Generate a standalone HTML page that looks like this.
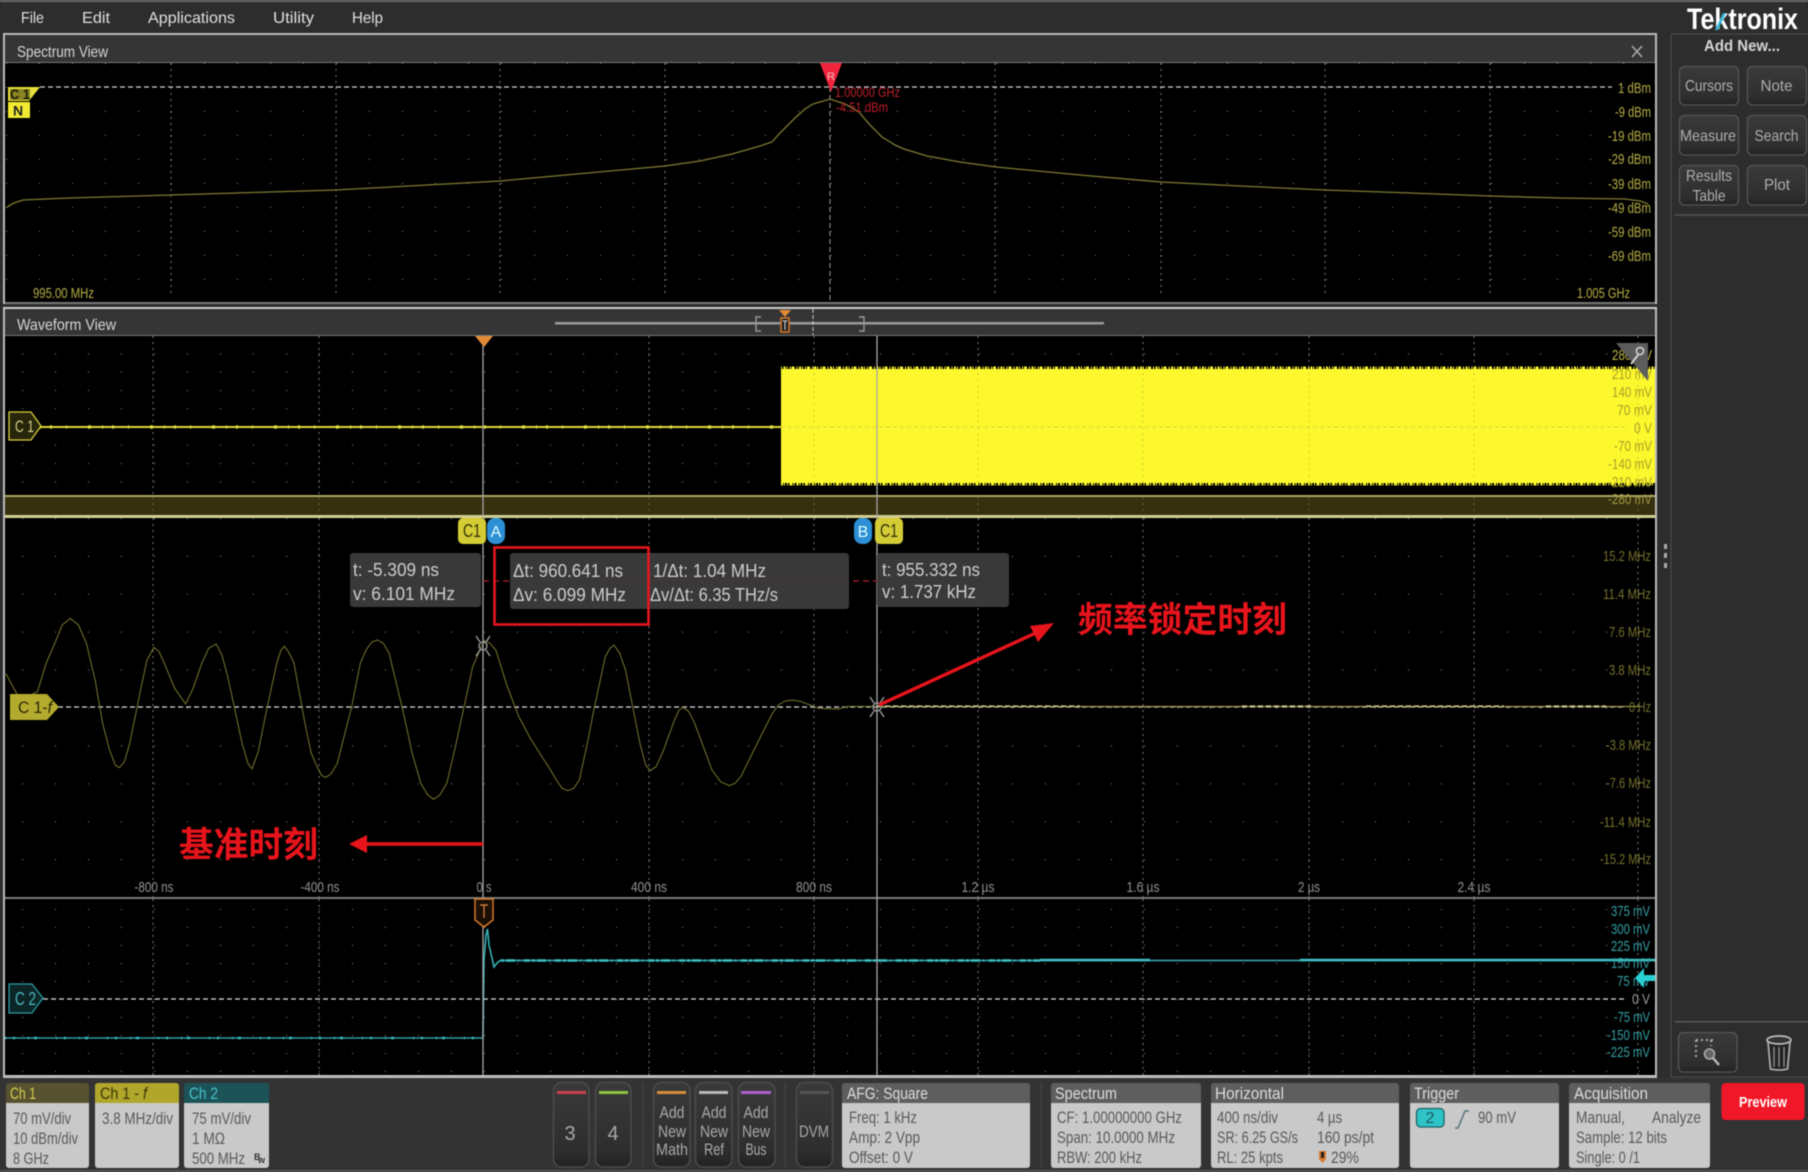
<!DOCTYPE html>
<html><head><meta charset="utf-8"><title>Tektronix</title>
<style>
html,body{margin:0;padding:0;background:#2d2d2d;width:1808px;height:1172px;overflow:hidden}
svg{display:block;filter:blur(0.5px)}
text{font-family:"Liberation Sans","Noto Sans CJK SC",sans-serif}
.cjk{font-family:"Noto Sans CJK SC","WenQuanYi Zen Hei",sans-serif;font-weight:700;fill:#e8141c}
.tr{vector-effect:non-scaling-stroke;fill:none}
.m{font-size:16px;fill:#e0e0e0}
.ttl{font-size:16px;fill:#d5d5d5}
.s{font-size:15px;fill:#b5ae45;text-anchor:end}
.w{font-size:15px;fill:#bdb748;text-anchor:end}
.f{font-size:15px;fill:#736f2c;text-anchor:end}
.c{font-size:15px;fill:#359ea4;text-anchor:end}
.t{font-size:15px;fill:#929292;text-anchor:middle}
.r{font-size:18px;fill:#cdcdcd}
.btn{font-size:16px;fill:#aeaeae;text-anchor:middle}
.hd{font-size:17px;fill:#dcdcdc}
.bd{font-size:17px;fill:#5a5a5a}
.bb{font-size:17px;fill:#a8a8a8;text-anchor:middle}
</style></head><body>
<svg width="1808" height="1172" viewBox="0 0 1808 1172" xmlns="http://www.w3.org/2000/svg">
<defs>
<pattern id="g1" patternUnits="userSpaceOnUse" x="6" y="63" width="33" height="24"><rect width="1" height="1" fill="#8a8a8a"/></pattern>
<pattern id="g2" patternUnits="userSpaceOnUse" x="22" y="335" width="33" height="18.3"><rect width="1" height="1" fill="#8a8a8a"/></pattern>
<pattern id="g3" patternUnits="userSpaceOnUse" x="22" y="518" width="33" height="37.9"><rect width="1" height="1" fill="#8a8a8a"/></pattern>
<pattern id="g4" patternUnits="userSpaceOnUse" x="22" y="909" width="33" height="18"><rect width="1" height="1" fill="#8a8a8a"/></pattern>
<linearGradient id="bk" x1="0" y1="0" x2="0" y2="1"><stop offset="0" stop-color="#3a3a3a"/><stop offset=".8" stop-color="#2e2e2e"/><stop offset="1" stop-color="#222"/></linearGradient>
</defs>

<rect width="1808" height="1172" fill="#2d2d2d"/>
<!-- menu -->
<rect x="0" y="0" width="1808" height="2" fill="#6a6a6a"/>
<text class="m" x="21" y="23" textLength="23" lengthAdjust="spacingAndGlyphs">File</text>
<text class="m" x="82" y="23" textLength="28" lengthAdjust="spacingAndGlyphs">Edit</text>
<text class="m" x="148" y="23" textLength="87" lengthAdjust="spacingAndGlyphs">Applications</text>
<text class="m" x="273" y="23" textLength="41" lengthAdjust="spacingAndGlyphs">Utility</text>
<text class="m" x="352" y="23" textLength="31" lengthAdjust="spacingAndGlyphs">Help</text>

<!-- frame -->
<rect x="3" y="33" width="1654" height="1045" fill="#bbb"/>
<!-- spectrum -->
<rect x="5" y="35" width="1650" height="27" fill="#353535"/>
<rect x="5" y="62" width="1650" height="1" fill="#777"/>
<text class="ttl" x="17" y="57" textLength="91" lengthAdjust="spacingAndGlyphs">Spectrum View</text>
<path d="M1632 46l10 11M1642 46l-10 11" stroke="#aaa" stroke-width="1.6" fill="none"/>
<rect x="5" y="63" width="1650" height="239" fill="#000"/>
<rect x="5" y="63" width="1650" height="239" fill="url(#g1)"/>
<g stroke="#7a7a7a" stroke-width="1" stroke-dasharray="2 4">
<path d="M171 63V296M336 63V296M500 63V296M665 63V296M995 63V296M1161 63V296M1325 63V296M1490 63V296"/>
</g>
<path d="M830 63V302" stroke="#999" stroke-dasharray="5 3"/>
<path d="M40 87H1612" stroke="#cfcfcf" stroke-width="1.2" stroke-dasharray="5 3"/>
<polyline fill="none" stroke="#7f7b34" stroke-width="1.3" points="7,207 14,203 23,200 69,198 171,195 336,190 500,181 665,166 700,161 732,154 760,146 772,142 780,133 796,117 805,109 813,104 830,99 845,104 859,112 870,125 882,137 895,145 904,149 927,156 960,162 996,167 1080,175 1161,182 1240,186 1325,190 1410,193 1490,196 1560,198 1625,199 1640,201 1648,204"/>
<path d="M820 63h22l-11 29z" fill="#f2243c"/>
<text x="831" y="80" font-size="11" fill="#f0c0c0" text-anchor="middle">R</text>
<text x="835" y="97" font-size="14" fill="#b81e28" textLength="65" lengthAdjust="spacingAndGlyphs">1.00000 GHz</text>
<text x="836" y="112" font-size="14" fill="#b81e28" textLength="52" lengthAdjust="spacingAndGlyphs">-4.51 dBm</text>
<path d="M8 87h32l-11 14h-21z" fill="#e6df3a"/>
<rect x="10" y="89" width="20" height="11" fill="#3a3710" opacity=".55"/>
<text x="10" y="99" font-size="14" fill="#1c1a04" font-weight="700" textLength="20" lengthAdjust="spacingAndGlyphs">C 1</text>
<rect x="8" y="102" width="22" height="16" fill="#f2ea30"/>
<text x="13" y="115.500" font-size="14" fill="#222" font-weight="700">N</text>
<text class="s" x="1651" y="93" textLength="33" lengthAdjust="spacingAndGlyphs">1 dBm</text>
<text class="s" x="1651" y="117" textLength="36" lengthAdjust="spacingAndGlyphs">-9 dBm</text>
<text class="s" x="1651" y="141" textLength="43" lengthAdjust="spacingAndGlyphs">-19 dBm</text>
<text class="s" x="1651" y="164" textLength="43" lengthAdjust="spacingAndGlyphs">-29 dBm</text>
<text class="s" x="1651" y="189" textLength="43" lengthAdjust="spacingAndGlyphs">-39 dBm</text>
<text class="s" x="1651" y="213" textLength="43" lengthAdjust="spacingAndGlyphs">-49 dBm</text>
<text class="s" x="1651" y="237" textLength="43" lengthAdjust="spacingAndGlyphs">-59 dBm</text>
<text class="s" x="1651" y="261" textLength="43" lengthAdjust="spacingAndGlyphs">-69 dBm</text>
<text x="33" y="298" font-size="15" fill="#b5ae45" textLength="61" lengthAdjust="spacingAndGlyphs">995.00 MHz</text>
<text x="1577" y="298" font-size="15" fill="#b5ae45" textLength="53" lengthAdjust="spacingAndGlyphs">1.005 GHz</text>
<rect x="5" y="302" width="1650" height="2" fill="#777"/>
<rect x="3" y="304" width="1654" height="3" fill="#2d2d2d"/>
<rect x="3" y="307" width="1654" height="2" fill="#ccc"/>

<!-- waveform title -->
<rect x="5" y="309" width="1650" height="26" fill="#353535"/>
<rect x="5" y="335" width="1650" height="1" fill="#777"/>
<text class="ttl" x="17" y="330" textLength="99" lengthAdjust="spacingAndGlyphs">Waveform View</text>
<rect x="555" y="322" width="549" height="2.5" fill="#9a9a9a"/>
<path d="M761 317h-5v14h5M859 317h5v14h-5" fill="none" stroke="#999" stroke-width="1.4"/>
<path d="M813 309V335" stroke="#ccc" stroke-dasharray="4 2"/>
<path d="M779 310h12l-6 7z" fill="#e08a35"/>
<rect x="781" y="318" width="8" height="14" fill="#222" stroke="#d9792a" stroke-width="1.5"/>
<path d="M785 321v9M782.5 321h5" stroke="#ddd" stroke-width="1"/>

<!-- upper plot -->
<rect x="5" y="336" width="1650" height="159" fill="#000"/>
<rect x="5" y="336" width="1650" height="159" fill="url(#g2)"/>
<g stroke="#7a7a7a" stroke-dasharray="2 4"><path d="M153 336V495M319 336V495M649 336V495"/></g>
<path d="M40 427H781" stroke="#dcd636" stroke-width="2"/>
<path d="M40 427H781" stroke="#e8e24a" stroke-width="3.2" stroke-dasharray="1 9 2 14 1 21 3 11"/>
<rect x="781" y="369" width="874" height="114" fill="#fdf72d"/>
<path d="M781 368H1655" stroke="#fdf72d" stroke-width="3" stroke-dasharray="1 1.5 2 1 1 2 1 1 3 2"/>
<path d="M781 484H1655" stroke="#fdf72d" stroke-width="3" stroke-dasharray="2 1 1 2 1 1.5 3 1 1 2"/>
<path d="M781 427H1625" stroke="#d8d23a" stroke-dasharray="4 3"/>
<g stroke="#d4cd2c" stroke-dasharray="2 4"><path d="M814 367V485M978 367V485M1143 367V485M1309 367V485M1474 367V485M1638 367V485"/></g>
<g stroke="#7a7a7a" stroke-dasharray="2 4"><path d="M814 336V367M978 336V367M1143 336V367M1309 336V367M1474 336V367M1638 336V367"/></g>
<text class="w" x="1652" y="360" textLength="40" lengthAdjust="spacingAndGlyphs">280 mV</text>
<text class="w" x="1652" y="379" style="fill:#a8a228" textLength="40" lengthAdjust="spacingAndGlyphs">210 mV</text>
<text class="w" x="1652" y="397" style="fill:#a8a228" textLength="40" lengthAdjust="spacingAndGlyphs">140 mV</text>
<text class="w" x="1652" y="415" style="fill:#a8a228" textLength="35" lengthAdjust="spacingAndGlyphs">70 mV</text>
<text class="w" x="1652" y="433" style="fill:#a8a228" textLength="18" lengthAdjust="spacingAndGlyphs">0 V</text>
<text class="w" x="1652" y="451" style="fill:#a8a228" textLength="38" lengthAdjust="spacingAndGlyphs">-70 mV</text>
<text class="w" x="1652" y="469" style="fill:#a8a228" textLength="44" lengthAdjust="spacingAndGlyphs">-140 mV</text>
<text class="w" x="1652" y="487" style="fill:#a8a228" textLength="44" lengthAdjust="spacingAndGlyphs">-210 mV</text>
<path d="M1616 343h32v38z" fill="#5c5c5c"/>
<circle cx="1640" cy="351" r="3.6" fill="none" stroke="#d0d0d0" stroke-width="1.6"/>
<path d="M1638 355l-7 9" stroke="#d0d0d0" stroke-width="2"/>
<path d="M9 412h22l10 14-10 14h-22z" fill="#27250a" stroke="#d8d040" stroke-width="1.3"/>
<text x="15" y="432" font-size="17" fill="#d8d28a" textLength="19" lengthAdjust="spacingAndGlyphs">C 1</text>

<!-- band -->
<rect x="5" y="495" width="1650" height="22" fill="#36300e"/>
<g stroke="#6a6430" stroke-dasharray="2 4"><path d="M153 497V516M319 497V516M649 497V516M814 497V516M978 497V516M1143 497V516M1309 497V516M1474 497V516M1638 497V516"/></g>
<rect x="5" y="495" width="1650" height="2" fill="#a8a565"/>
<rect x="5" y="515" width="1650" height="3" fill="#d2cf92"/>
<text class="w" x="1652" y="504" style="fill:#9d9740" textLength="44" lengthAdjust="spacingAndGlyphs">-280 mV</text>

<!-- middle plot -->
<rect x="5" y="518" width="1650" height="379" fill="#000"/>
<rect x="5" y="518" width="1650" height="379" fill="url(#g3)"/>
<g stroke="#7a7a7a" stroke-dasharray="2 4"><path d="M153 518V897M319 518V897M649 518V897M814 518V897M978 518V897M1143 518V897M1309 518V897M1474 518V897M1638 518V897"/></g>
<path d="M58 707H1625" stroke="#dcdcdc" stroke-width="1.2" stroke-dasharray="5 3"/>
<g transform="translate(0,620) scale(0.5765,0.33333)">
<polyline class="tr" stroke="#7a762f" stroke-width="1" stroke-linejoin="round" points="10,160 35,240 65,215 80,130 95,70 108,15 122,-5 136,15 150,70 158,130 165,180 178,310 190,390 200,435 207,443 216,425 225,370 245,200 255,120 267,82 276,95 285,130 303,205 322,252 335,205 350,130 362,85 375,72 385,105 395,170 420,370 430,430 437,447 448,395 460,290 480,130 487,92 493,78 502,100 510,130 530,320 540,400 550,440 558,467 565,472 574,462 585,430 610,260 625,130 635,90 645,66 655,60 665,70 675,100 700,280 715,400 730,490 742,525 752,538 763,525 775,490 790,380 805,260 820,140 830,100 840,62 850,70 860,90 880,200 900,290 920,355 940,410 955,450 965,480 975,505 985,512 995,505 1005,480 1020,360 1030,270 1050,110 1058,85 1065,75 1075,100 1085,150 1110,370 1120,435 1128,452 1138,440 1150,395 1170,300 1178,270 1185,262 1195,275 1205,310 1235,450 1250,485 1265,497 1275,490 1285,470 1325,330 1340,280 1350,255 1362,243 1375,240 1390,245 1405,255 1420,265 1455,267 1470,259 1522,259"/>
</g>
<path d="M877 706.500H1640" stroke="#9a9646" stroke-width="1.2"/>
<path d="M877 706H1080M1242 706H1312M1366 706H1504M1546 706H1606" stroke="#d4d49a" stroke-width="1.3" stroke-dasharray="5 3"/>
<!-- freq labels -->
<text class="f" x="1651" y="561" textLength="48" lengthAdjust="spacingAndGlyphs">15.2 MHz</text>
<text class="f" x="1651" y="599" textLength="48" lengthAdjust="spacingAndGlyphs">11.4 MHz</text>
<text class="f" x="1651" y="637" textLength="42" lengthAdjust="spacingAndGlyphs">7.6 MHz</text>
<text class="f" x="1651" y="675" textLength="42" lengthAdjust="spacingAndGlyphs">3.8 MHz</text>
<text class="f" x="1651" y="712" textLength="22" lengthAdjust="spacingAndGlyphs">0 Hz</text>
<text class="f" x="1651" y="750" textLength="45" lengthAdjust="spacingAndGlyphs">-3.8 MHz</text>
<text class="f" x="1651" y="788" textLength="45" lengthAdjust="spacingAndGlyphs">-7.6 MHz</text>
<text class="f" x="1651" y="827" textLength="51" lengthAdjust="spacingAndGlyphs">-11.4 MHz</text>
<text class="f" x="1651" y="864" textLength="51" lengthAdjust="spacingAndGlyphs">-15.2 MHz</text>
<!-- time labels -->
<text class="t" x="154" y="892" textLength="39" lengthAdjust="spacingAndGlyphs">-800 ns</text>
<text class="t" x="320" y="892" textLength="39" lengthAdjust="spacingAndGlyphs">-400 ns</text>
<text class="t" x="484" y="892" textLength="15" lengthAdjust="spacingAndGlyphs">0 s</text>
<text class="t" x="649" y="892" textLength="36" lengthAdjust="spacingAndGlyphs">400 ns</text>
<text class="t" x="814" y="892" textLength="36" lengthAdjust="spacingAndGlyphs">800 ns</text>
<text class="t" x="978" y="892" textLength="33" lengthAdjust="spacingAndGlyphs">1.2 µs</text>
<text class="t" x="1143" y="892" textLength="33" lengthAdjust="spacingAndGlyphs">1.6 µs</text>
<text class="t" x="1309" y="892" textLength="22" lengthAdjust="spacingAndGlyphs">2 µs</text>
<text class="t" x="1474" y="892" textLength="33" lengthAdjust="spacingAndGlyphs">2.4 µs</text>
<path d="M10 694h37l12 13-12 13h-37z" fill="#b3ab2e"/>
<text x="18" y="713" font-size="17" fill="#2a2808" textLength="34" lengthAdjust="spacingAndGlyphs">C 1-<tspan font-style="italic">f</tspan></text>

<!-- lower plot -->
<rect x="5" y="897" width="1650" height="2" fill="#7a7a7a"/>
<rect x="5" y="899" width="1650" height="176" fill="#000"/>
<rect x="5" y="899" width="1650" height="176" fill="url(#g4)"/>
<g stroke="#7a7a7a" stroke-dasharray="2 4"><path d="M153 899V1075M319 899V1075M649 899V1075M814 899V1075M978 899V1075M1143 899V1075M1309 899V1075M1474 899V1075M1638 899V1075"/></g>
<path d="M43 999H1627" stroke="#dcdcdc" stroke-width="1.2" stroke-dasharray="5 3"/>
<path d="M5 1038H483" stroke="#2f9da2" stroke-width="1.6"/>
<path d="M5 1038H483" stroke="#3bbcc0" stroke-width="2.6" stroke-dasharray="1 7 2 13 1 5 3 19"/>
<polyline fill="none" stroke="#33b0b5" stroke-width="1.6" points="483,1038 484,960 486,935 487.5,929 489,945 492,958 494,967 497,963 501,960"/>
<path d="M501 960.500H1655" stroke="#2f9da2" stroke-width="1.8"/>
<path d="M501 960.500H1040" stroke="#3bc0c4" stroke-width="2.6" stroke-dasharray="3 2 9 3 1 5 6 2"/>
<path d="M1040 960H1150M1300 960H1655" stroke="#3bc0c4" stroke-width="2.4"/>
<path d="M9 984h23l11 14-11 15h-23z" fill="#0c2628" stroke="#2c9aa0" stroke-width="1.3"/>
<text x="15" y="1005" font-size="18" fill="#4bb7bd" textLength="21" lengthAdjust="spacingAndGlyphs">C 2</text>
<text class="c" x="1650" y="916" textLength="39" lengthAdjust="spacingAndGlyphs">375 mV</text>
<text class="c" x="1650" y="934" textLength="39" lengthAdjust="spacingAndGlyphs">300 mV</text>
<text class="c" x="1650" y="951" textLength="39" lengthAdjust="spacingAndGlyphs">225 mV</text>
<text class="c" x="1650" y="968" textLength="39" lengthAdjust="spacingAndGlyphs">150 mV</text>
<text class="c" x="1650" y="986" textLength="33" lengthAdjust="spacingAndGlyphs">75 mV</text>
<text class="c" x="1650" y="1004" style="fill:#999" textLength="18" lengthAdjust="spacingAndGlyphs">0 V</text>
<text class="c" x="1650" y="1022" textLength="36" lengthAdjust="spacingAndGlyphs">-75 mV</text>
<text class="c" x="1650" y="1040" textLength="43" lengthAdjust="spacingAndGlyphs">-150 mV</text>
<text class="c" x="1650" y="1057" textLength="43" lengthAdjust="spacingAndGlyphs">-225 mV</text>
<path d="M1635 978l9-10v7h11v6h-11v7z" fill="#2ad0d4"/>

<!-- cursors -->
<path d="M483 336V1075M877 336V1075" stroke="#a8a8a8" stroke-width="1.3"/>
<path d="M475 336h18l-9 11z" fill="#e08a35"/>
<path d="M475 899h18v21l-9 7-9-7z" fill="#1a0f04" stroke="#d9792a" stroke-width="1.5"/>
<path d="M484 904v14M480 905h8" stroke="#c8763a" stroke-width="1.4"/>

<path d="M483 581H877" stroke="#a8222a" stroke-width="1.2" stroke-dasharray="6 4"/>
<rect x="350" y="553" width="131" height="54" rx="3" fill="#393939"/>
<rect x="510" y="553" width="339" height="56" rx="3" fill="#393939"/>
<path d="M600 581H849" stroke="#6a2a2c" stroke-width="1" stroke-dasharray="6 4" opacity=".5"/>
<rect x="877" y="553" width="132" height="54" rx="3" fill="#393939"/>
<text class="r" x="353" y="576" textLength="86" lengthAdjust="spacingAndGlyphs">t: -5.309 ns</text>
<text class="r" x="353" y="600" textLength="102" lengthAdjust="spacingAndGlyphs">v: 6.101 MHz</text>
<text class="r" x="513" y="577" textLength="110" lengthAdjust="spacingAndGlyphs">Δt: 960.641 ns</text>
<text class="r" x="513" y="601" textLength="113" lengthAdjust="spacingAndGlyphs">Δv: 6.099 MHz</text>
<text class="r" x="653" y="577" textLength="113" lengthAdjust="spacingAndGlyphs">1/Δt: 1.04 MHz</text>
<text class="r" x="650" y="601" textLength="128" lengthAdjust="spacingAndGlyphs">Δv/Δt: 6.35 THz/s</text>
<text class="r" x="882" y="576" textLength="98" lengthAdjust="spacingAndGlyphs">t: 955.332 ns</text>
<text class="r" x="882" y="598" textLength="94" lengthAdjust="spacingAndGlyphs">v: 1.737 kHz</text>
<rect x="494.500" y="547.500" width="154" height="77" fill="none" stroke="#e5171f" stroke-width="2.6"/>

<rect x="458" y="518" width="28" height="26" rx="5" fill="#d4cc35"/>
<text x="463" y="537" font-size="18" fill="#35330a" textLength="18" lengthAdjust="spacingAndGlyphs">C1</text>
<rect x="487" y="518" width="18" height="26" rx="8" fill="#2d8fd5"/>
<text x="496" y="537" font-size="16" fill="#dff" text-anchor="middle">A</text>
<rect x="854" y="518" width="18" height="26" rx="8" fill="#2d8fd5"/>
<text x="863" y="537" font-size="16" fill="#dff" text-anchor="middle">B</text>
<rect x="875" y="518" width="28" height="26" rx="5" fill="#d4cc35"/>
<text x="880" y="537" font-size="18" fill="#35330a" textLength="18" lengthAdjust="spacingAndGlyphs">C1</text>

<!-- cursor crosshair markers -->
<g stroke="#9a9a9a" stroke-width="1.4" fill="none">
<circle cx="483" cy="646" r="4"/><path d="M476 636l4 6M490 636l-4 6M476 656l4-6M490 656l-4-6"/>
<circle cx="877" cy="707" r="4"/><path d="M870 697l4 6M884 697l-4 6M870 717l4-6M884 717l-4-6"/>
</g>

<!-- annotations -->
<path d="M879 705L1040 631" stroke="#e8141c" stroke-width="3.4"/>
<path d="M1054 623l-24 3 8 16z" fill="#e8141c"/>
<path d="M483 844H362" stroke="#e8141c" stroke-width="3.6"/>
<path d="M349 844l18-9v18z" fill="#e8141c"/>
<text class="cjk" x="1078" y="632" font-size="35" textLength="209" lengthAdjust="spacingAndGlyphs">频率锁定时刻</text>
<text class="cjk" x="179" y="857" font-size="35" textLength="139" lengthAdjust="spacingAndGlyphs">基准时刻</text>

<rect x="5" y="1075" width="1650" height="3" fill="#bdbdbd"/>

<!-- right side -->
<rect x="1657" y="33" width="151" height="1139" fill="#2d2d2d"/>
<path d="M1671 34H1808M1671 34V1077H1808" stroke="#4e4e4e" fill="none"/>
<rect x="1664" y="544" width="3" height="5" fill="#aaa"/><rect x="1664" y="553" width="3" height="5" fill="#aaa"/><rect x="1664" y="563" width="3" height="5" fill="#aaa"/>
<text x="1687" y="29" font-size="30" font-weight="700" fill="#fff" textLength="111" lengthAdjust="spacingAndGlyphs">Tektronix</text>
<path d="M1715 30l8-17h3l-8 17z" fill="#38b6d8"/>
<text x="1742" y="51" font-size="16" font-weight="700" fill="#d5d5d5" text-anchor="middle" textLength="76" lengthAdjust="spacingAndGlyphs">Add New...</text>
<g fill="url(#bk)" stroke="#565656" stroke-width="1.3">
<rect x="1679.500" y="66.500" width="59" height="38.500" rx="5"/><rect x="1747.500" y="66.500" width="59" height="38.500" rx="5"/>
<rect x="1679.500" y="115.500" width="59" height="39.500" rx="5"/><rect x="1747.500" y="115.500" width="59" height="39.500" rx="5"/>
<rect x="1679.500" y="165.500" width="59" height="39.500" rx="5"/><rect x="1747.500" y="165.500" width="59" height="39.500" rx="5"/>
<rect x="1678.500" y="1032.500" width="58.500" height="39.500" rx="5"/>
</g>
<text class="btn" x="1709" y="91" textLength="48" lengthAdjust="spacingAndGlyphs">Cursors</text>
<text class="btn" x="1776.500" y="91" textLength="32" lengthAdjust="spacingAndGlyphs">Note</text>
<text class="btn" x="1708" y="141" textLength="56" lengthAdjust="spacingAndGlyphs">Measure</text>
<text class="btn" x="1776.500" y="141" textLength="44" lengthAdjust="spacingAndGlyphs">Search</text>
<text class="btn" x="1709" y="181" textLength="46" lengthAdjust="spacingAndGlyphs">Results</text>
<text class="btn" x="1709" y="201" textLength="33" lengthAdjust="spacingAndGlyphs">Table</text>
<text class="btn" x="1777" y="190" textLength="26" lengthAdjust="spacingAndGlyphs">Plot</text>
<rect x="1675" y="214" width="133" height="2" fill="#4a4a4a"/>
<rect x="1675" y="1021" width="133" height="1.500" fill="#5a5a5a"/>
<path d="M1696 1040h19M1696 1040v18M1711 1040v6" stroke="#aaa" stroke-width="2" stroke-dasharray="2 3" fill="none"/>
<circle cx="1709.500" cy="1054" r="5" fill="#666" stroke="#aaa" stroke-width="1.600"/>
<path d="M1713 1058l6 7" stroke="#bbb" stroke-width="2.400"/>
<path d="M1768 1042h22l-2.500 27q-8.500 2-17 0z" fill="#222" stroke="#aaa" stroke-width="1.800"/>
<ellipse cx="1779" cy="1040" rx="12" ry="4" fill="#333" stroke="#bbb" stroke-width="1.800"/>
<path d="M1774 1047v20M1779 1047v20M1784 1047v20" stroke="#999" stroke-width="1.300"/>

<!-- bottom bar -->
<rect x="0" y="1078" width="1808" height="94" fill="#333"/>
<rect x="0" y="1170" width="1808" height="2" fill="#555"/>
<g fill="#c9c9c9">
<rect x="6" y="1090" width="83" height="78" rx="3"/><rect x="95" y="1090" width="84" height="78" rx="3"/><rect x="184" y="1090" width="85" height="78" rx="3"/>
<rect x="842" y="1090" width="188" height="78" rx="3"/><rect x="1051" y="1090" width="150" height="78" rx="3"/><rect x="1211" y="1090" width="188" height="78" rx="3"/><rect x="1410" y="1090" width="149" height="78" rx="3"/><rect x="1569" y="1090" width="141" height="78" rx="3"/>
</g>
<path d="M6 1103v-17a3 3 0 0 1 3-3h77a3 3 0 0 1 3 3v17z" fill="#575230"/>
<path d="M95 1103v-17a3 3 0 0 1 3-3h78a3 3 0 0 1 3 3v17z" fill="#b0a62c"/>
<path d="M184 1103v-17a3 3 0 0 1 3-3h79a3 3 0 0 1 3 3v17z" fill="#1c5358"/>
<g fill="#5e5e5e">
<path d="M842 1103v-17a3 3 0 0 1 3-3h182a3 3 0 0 1 3 3v17z"/>
<path d="M1051 1103v-17a3 3 0 0 1 3-3h144a3 3 0 0 1 3 3v17z"/>
<path d="M1211 1103v-17a3 3 0 0 1 3-3h182a3 3 0 0 1 3 3v17z"/>
<path d="M1410 1103v-17a3 3 0 0 1 3-3h143a3 3 0 0 1 3 3v17z"/>
<path d="M1569 1103v-17a3 3 0 0 1 3-3h135a3 3 0 0 1 3 3v17z"/>
</g>
<text x="10" y="1099" font-size="17" fill="#d8cf50" textLength="26" lengthAdjust="spacingAndGlyphs">Ch 1</text>
<text x="100" y="1099" font-size="17" fill="#3a3608" textLength="47" lengthAdjust="spacingAndGlyphs">Ch 1 - <tspan font-style="italic">f</tspan></text>
<text x="189" y="1099" font-size="17" fill="#46c4cc" textLength="29" lengthAdjust="spacingAndGlyphs">Ch 2</text>
<text class="bd" x="13" y="1124" textLength="58" lengthAdjust="spacingAndGlyphs">70 mV/div</text>
<text class="bd" x="13" y="1144" textLength="65" lengthAdjust="spacingAndGlyphs">10 dBm/div</text>
<text class="bd" x="13" y="1164" textLength="36" lengthAdjust="spacingAndGlyphs">8 GHz</text>
<text class="bd" x="102" y="1124" textLength="71" lengthAdjust="spacingAndGlyphs">3.8 MHz/div</text>
<text class="bd" x="192" y="1124" textLength="59" lengthAdjust="spacingAndGlyphs">75 mV/div</text>
<text class="bd" x="192" y="1144" textLength="33" lengthAdjust="spacingAndGlyphs">1 MΩ</text>
<text class="bd" x="192" y="1164" textLength="53" lengthAdjust="spacingAndGlyphs">500 MHz</text>
<text x="254" y="1160" font-size="9" fill="#333" font-weight="700">B</text><text x="258" y="1163" font-size="9" fill="#333" font-weight="700">w</text>

<g fill="url(#bk)" stroke="#4f4f4f" stroke-width="1.3">
<rect x="553.500" y="1082.500" width="35.500" height="84.500" rx="8"/><rect x="595.500" y="1082.500" width="35.500" height="84.500" rx="8"/>
<rect x="653.500" y="1082.500" width="36.500" height="84.500" rx="8"/><rect x="695.500" y="1082.500" width="36.500" height="84.500" rx="8"/><rect x="738.500" y="1082.500" width="36.500" height="84.500" rx="8"/>
<rect x="796.500" y="1082.500" width="36" height="84.500" rx="8"/>
</g>
<rect x="557" y="1091" width="29" height="3" fill="#c8414f"/>
<rect x="599" y="1091" width="29" height="3" fill="#8ec63f"/>
<rect x="657" y="1091" width="29" height="3" fill="#d98c3a"/>
<rect x="699" y="1091" width="29" height="3" fill="#b8b8b8"/>
<rect x="741" y="1091" width="30" height="3" fill="#b060d0"/>
<rect x="800" y="1091" width="29" height="3" fill="#555"/>
<path d="M643 1082V1167M785 1082V1167M1041 1082V1167" stroke="#444"/>
<text class="bb" x="570" y="1140" style="font-size:20px">3</text>
<text class="bb" x="613" y="1140" style="font-size:20px">4</text>
<text class="bb" x="672" y="1118" textLength="25" lengthAdjust="spacingAndGlyphs">Add</text><text class="bb" x="672" y="1137" textLength="28" lengthAdjust="spacingAndGlyphs">New</text><text class="bb" x="672" y="1155" textLength="32" lengthAdjust="spacingAndGlyphs">Math</text>
<text class="bb" x="714" y="1118" textLength="25" lengthAdjust="spacingAndGlyphs">Add</text><text class="bb" x="714" y="1137" textLength="28" lengthAdjust="spacingAndGlyphs">New</text><text class="bb" x="714" y="1155" textLength="20" lengthAdjust="spacingAndGlyphs">Ref</text>
<text class="bb" x="756" y="1118" textLength="25" lengthAdjust="spacingAndGlyphs">Add</text><text class="bb" x="756" y="1137" textLength="28" lengthAdjust="spacingAndGlyphs">New</text><text class="bb" x="756" y="1155" textLength="21" lengthAdjust="spacingAndGlyphs">Bus</text>
<text class="bb" x="814" y="1137" textLength="30" lengthAdjust="spacingAndGlyphs">DVM</text>

<text class="hd" x="847" y="1099" textLength="81" lengthAdjust="spacingAndGlyphs">AFG: Square</text>
<text class="bd" x="849" y="1123" textLength="68" lengthAdjust="spacingAndGlyphs">Freq: 1 kHz</text>
<text class="bd" x="849" y="1143" textLength="71" lengthAdjust="spacingAndGlyphs">Amp: 2 Vpp</text>
<text class="bd" x="849" y="1163" textLength="64" lengthAdjust="spacingAndGlyphs">Offset: 0 V</text>

<text class="hd" x="1055" y="1099" textLength="62" lengthAdjust="spacingAndGlyphs">Spectrum</text>
<text class="bd" x="1057" y="1123" textLength="125" lengthAdjust="spacingAndGlyphs">CF: 1.00000000 GHz</text>
<text class="bd" x="1057" y="1143" textLength="118" lengthAdjust="spacingAndGlyphs">Span: 10.0000 MHz</text>
<text class="bd" x="1057" y="1163" textLength="85" lengthAdjust="spacingAndGlyphs">RBW: 200 kHz</text>

<text class="hd" x="1215" y="1099" textLength="69" lengthAdjust="spacingAndGlyphs">Horizontal</text>
<text class="bd" x="1217" y="1123" textLength="61" lengthAdjust="spacingAndGlyphs">400 ns/div</text>
<text class="bd" x="1217" y="1143" textLength="81" lengthAdjust="spacingAndGlyphs">SR: 6.25 GS/s</text>
<text class="bd" x="1217" y="1163" textLength="66" lengthAdjust="spacingAndGlyphs">RL: 25 kpts</text>
<text class="bd" x="1317" y="1123" textLength="25" lengthAdjust="spacingAndGlyphs">4 µs</text>
<text class="bd" x="1317" y="1143" textLength="57" lengthAdjust="spacingAndGlyphs">160 ps/pt</text>
<path d="M1319 1151h7v8l-3.500 4-3.500-4z" fill="#d9792a"/><rect x="1321" y="1152" width="3" height="6" fill="#222"/>
<text class="bd" x="1331" y="1163" textLength="28" lengthAdjust="spacingAndGlyphs">29%</text>

<text class="hd" x="1414" y="1099" textLength="45" lengthAdjust="spacingAndGlyphs">Trigger</text>
<rect x="1416.500" y="1108.500" width="27.500" height="18.500" rx="4" fill="#2ec4c8" stroke="#1c6468" stroke-width="1.300"/>
<text x="1430" y="1123" font-size="16" fill="#24585c" text-anchor="middle">2</text>
<path d="M1455 1128h3l7-17h4" fill="none" stroke="#55737a" stroke-width="1.500"/>
<text class="bd" x="1478" y="1123" textLength="38" lengthAdjust="spacingAndGlyphs">90 mV</text>

<text class="hd" x="1574" y="1099" textLength="74" lengthAdjust="spacingAndGlyphs">Acquisition</text>
<text class="bd" x="1576" y="1123" textLength="49" lengthAdjust="spacingAndGlyphs">Manual,</text>
<text class="bd" x="1652" y="1123" textLength="49" lengthAdjust="spacingAndGlyphs">Analyze</text>
<text class="bd" x="1576" y="1143" textLength="91" lengthAdjust="spacingAndGlyphs">Sample: 12 bits</text>
<text class="bd" x="1576" y="1163" textLength="64" lengthAdjust="spacingAndGlyphs">Single: 0 /1</text>

<rect x="1721.500" y="1083" width="83" height="37" rx="4" fill="#f01828"/>
<text x="1763" y="1107" font-size="15" font-weight="700" fill="#fff" text-anchor="middle" textLength="48" lengthAdjust="spacingAndGlyphs">Preview</text>
</svg>
</body></html>
